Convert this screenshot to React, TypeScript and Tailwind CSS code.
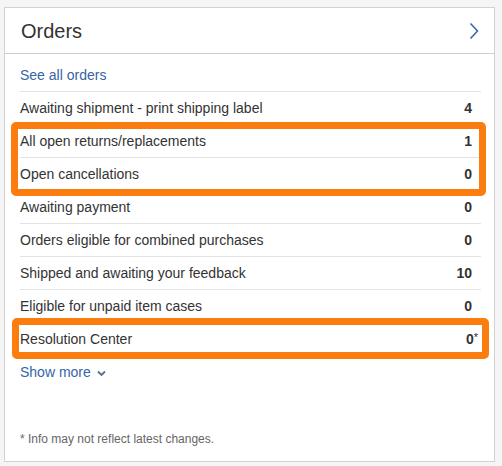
const rows: { label: string; count: string }[] = [
  { label: "Awaiting shipment - print shipping label", count: "4" },
  { label: "All open returns/replacements", count: "1" },
  { label: "Open cancellations", count: "0" },
  { label: "Awaiting payment", count: "0" },
  { label: "Orders eligible for combined purchases", count: "0" },
  { label: "Shipped and awaiting your feedback", count: "10" },
  { label: "Eligible for unpaid item cases", count: "0" },
  { label: "Resolution Center", count: "0*" },
];

export default function App() {
  return (
    <div className="w-[502px] h-[466px] bg-[#f5f5f5] pt-[7px] pl-[4px] font-['Liberation_Sans',Arial,sans-serif]">
      <div className="relative w-[491px] h-[455px] bg-white border border-[#d2d2d2] flex flex-col">
        {/* Header */}
        <div className="h-[46px] border-b border-[#cfcfcf] pl-4 pr-[15px] flex items-center justify-between">
          <h2 className="text-[20px] text-[#333] leading-none pt-[1px]">Orders</h2>
          <svg width="10" height="18" viewBox="0 0 10 18" fill="none">
            <polyline points="1.5,1.5 8.5,9 1.5,16.5" stroke="#3a68ae" strokeWidth="1.6" />
          </svg>
        </div>

        {/* Body */}
        <div className="pl-[15px] pr-[13px]">
          <div className="h-[38px] pt-[5px] flex items-center border-b border-[#e3e3e3]">
            <span className="text-[14px] text-[#3665a8]">See all orders</span>
          </div>
          {rows.map((r, i) => (
            <div
              key={r.label}
              className={
                "h-[33px] flex items-center justify-between text-[14px] text-[#333] " +
                (i < rows.length - 1 ? "border-b border-[#e3e3e3]" : "")
              }
            >
              <span>{r.label}</span>
              <span className={"font-bold " + (r.count === "0*" ? "pr-[3px]" : "pr-[9px]")}>
                {r.count === "0*" ? (
                  <>
                    0<span className="font-normal text-[11px] align-top">*</span>
                  </>
                ) : (
                  r.count
                )}
              </span>
            </div>
          ))}
          <div className="h-[32px] flex items-center gap-[6px] text-[14px] text-[#3665a8]">
            <span>Show more</span>
            <svg width="9" height="7" viewBox="0 0 9 7" fill="none" className="mt-[2px]">
              <polyline points="1,1.5 4.5,5 8,1.5" stroke="#5a6f8e" strokeWidth="1.8" />
            </svg>
          </div>
        </div>

        <div className="mt-auto pl-[15px] pb-[13px] text-[12px] text-[#666]">
          * Info may not reflect latest changes.
        </div>

        {/* Annotation highlights */}
        <div className="absolute left-[6px] top-[114px] w-[475px] h-[74px] border-[7px] border-[#fb7d10] rounded-[5px]" />
        <div className="absolute left-[7px] top-[310px] w-[477px] h-[41px] border-[7px] border-[#fb7d10] rounded-[5px]" />
      </div>
    </div>
  );
}
